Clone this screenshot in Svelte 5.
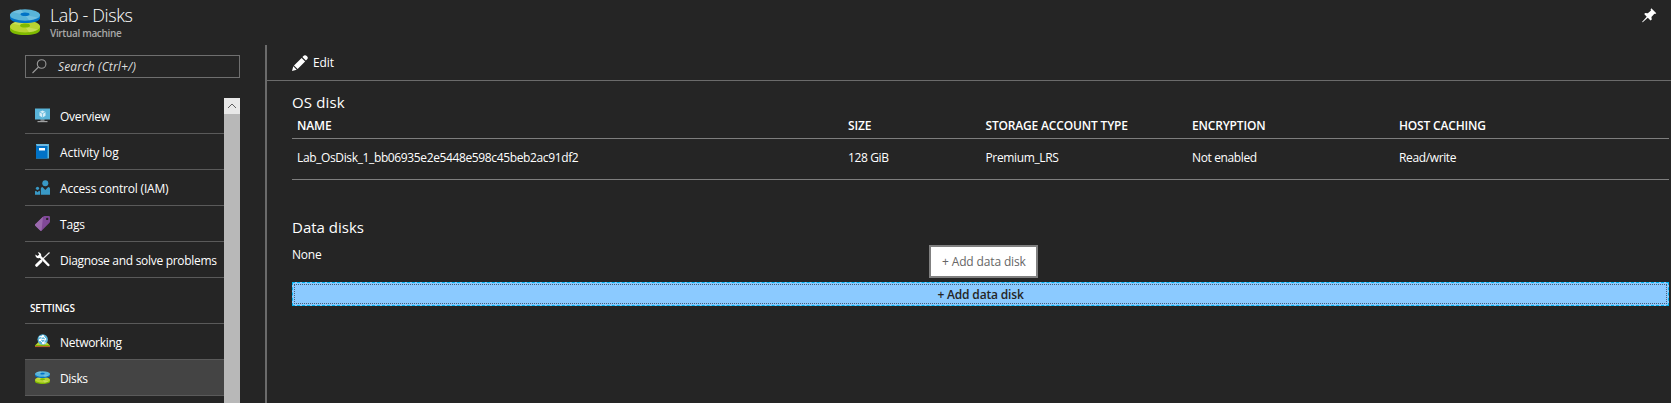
<script>
  const general = [
    { icon: 'overview', label: 'Overview', ls: -0.3 },
    { icon: 'log', label: 'Activity log', ls: -0.1 },
    { icon: 'access', label: 'Access control (IAM)', ls: -0.18 },
    { icon: 'tag', label: 'Tags', ls: -0.15 },
    { icon: 'tools', label: 'Diagnose and solve problems', ls: -0.3 }
  ];
  const settings = [
    { icon: 'network', label: 'Networking', ls: -0.3 },
    { icon: 'disks', label: 'Disks', ls: -0.35, active: true }
  ];
  const columns = ['NAME', 'SIZE', 'STORAGE ACCOUNT TYPE', 'ENCRYPTION', 'HOST CACHING'];
  const disk = ['Lab_OsDisk_1_bb06935e2e5448e598c45beb2ac91df2', '128 GiB', 'Premium_LRS', 'Not enabled', 'Read/write'];
</script>

{#snippet disks(size)}
  <svg width={size} height={size} viewBox="0 0 30 30">
    <path d="M0 19v4c0 3 6.700 5 15 5s15-2 15-5v-4z" fill="#7fba00" />
    <ellipse cx="15" cy="19.500" rx="15" ry="6" fill="#b8d432" />
    <path d="M15 19.500L2 16.500Q6 14 11 13.700zM15 19.500l13 3q-4 2.500-9 2.800z" fill="#d3e67b" opacity=".5" />
    <ellipse cx="15" cy="18.500" rx="5" ry="2" fill="#7fba00" />
    <path d="M0 7v4c0 3 6.700 5 15 5s15-2 15-5V7z" fill="#0072c6" />
    <ellipse cx="15" cy="8" rx="15" ry="5.700" fill="#59b4d9" />
    <path d="M15 8L2 5Q6 2.800 11 2.500zM15 8l13 2.500q-4 2.500-9 2.800z" fill="#8bcbe5" opacity=".5" />
    <ellipse cx="15" cy="7.300" rx="4.500" ry="1.800" fill="#0072c6" />
  </svg>
{/snippet}

{#snippet glyph(name)}
  {#if name === 'overview'}
    <svg width="15" height="15" viewBox="0 0 15 15">
      <path d="M5.500 11h4v2.500h-4z" fill="#7a7a7a" /><path d="M2.500 13h10v1.200h-10z" fill="#a0a1a2" />
      <path d="M0 .500h15v11H0z" fill="#59b4d9" />
      <path d="M7.500 2.500l3 1.500v3.800l-3 1.700-3-1.700V4z" fill="#d5edf7" />
      <path d="M4.500 4l3 1.500L10.500 4M7.500 5.500v4" stroke="#59b4d9" stroke-width=".7" fill="none" />
    </svg>
  {:else if name === 'log'}
    <svg width="15" height="15" viewBox="0 0 15 15">
      <path d="M1 0h13v14.500H1z" fill="#59b4d9" /><path d="M2 .900h10.500v1H2z" fill="#fff" />
      <path d="M1 1.500h11.500v13H1z" fill="#0072c6" /><path d="M4 4h6v2.500H4z" fill="#fff" />
    </svg>
  {:else if name === 'access'}
    <svg width="15" height="15" viewBox="0 0 15 15" fill="#3999c6">
      <circle cx="10.300" cy="3.200" r="3" /><path d="M5.800 14.800V8.500Q5.800 7 7.500 7l2.800 3L13.200 7Q15 7 15 8.500v6.300z" />
      <circle cx="2.500" cy="8.300" r="1.600" /><path d="M0 14.800v-3q0-1 1-1l1.500 1.500L4 10.800q1 0 1 1v3z" />
    </svg>
  {:else if name === 'tag'}
    <svg width="15" height="15" viewBox="0 0 15 15">
      <path d="M0 8.500L8 .700Q8.700.100 9.700.100h4.100Q15 .100 15 1.200v4.200q0 .900-.700 1.600L6.800 14.500Q6 15.200 5.200 14.500L.300 9.700Q-.300 9 0 8.500z" fill="#804998" />
      <path d="M0 8.500L8 .700 6.500 14.800Q6 15.200 5.200 14.500L.300 9.700Q-.300 9 0 8.500z" fill="#9a69ad" />
      <circle cx="12.200" cy="2.900" r="1.200" fill="#252525" />
    </svg>
  {:else if name === 'tools'}
    <svg width="15" height="15" viewBox="0 0 15 15">
      <path d="M14.500.500L5.800 8.800" stroke="#eee" stroke-width="1.200" /><path d="M1.700 13.300l4.100-4" stroke="#fff" stroke-width="3" stroke-linecap="round" />
      <path d="M5 4.500l8.300 8.500" stroke="#fff" stroke-width="2.500" stroke-linecap="round" />
      <path d="M2.800.300Q5 .100 6 2q.600 1.500-.200 2.800L4.500 6Q2.500 6.500 1.200 5.200.200 4.200.500 2.500l2 1.600 1.800-1.600z" fill="#fff" />
    </svg>
  {:else if name === 'network'}
    <svg width="15" height="15" viewBox="0 0 15 15">
      <path d="M0 11.500L3.500 8h8l3.500 3.500z" fill="#b8d432" /><path d="M0 11.500h15v1.600H0z" fill="#b3602d" /><path d="M0 11h15v.900H0z" fill="#7fba00" />
      <circle cx="7.700" cy="5.500" r="5.200" fill="#59b4d9" />
      <path d="M4 3l4-1 3 3-3 4-3-3 3-4M5 6l6-1M8 9l3 0" stroke="#fff" stroke-width="1" fill="none" />
      <circle cx="8" cy="2.200" r="1.200" fill="#fff" /><circle cx="5" cy="6" r="1.200" fill="#fff" /><circle cx="8.200" cy="9" r="1.200" fill="#fff" />
    </svg>
  {:else}
    {@render disks(15)}
  {/if}
{/snippet}

{#snippet item(entry)}
  <a class="item" class:active={entry.active}>
    {@render glyph(entry.icon)}
    <span style:letter-spacing="{entry.ls}px">{entry.label}</span>
  </a>
{/snippet}

<div class="blade">
  <header>
    {@render disks(30)}
    <div class="titles">
      <h1>Lab - Disks</h1>
      <p>Virtual machine</p>
    </div>
    <svg class="pin" width="15" height="15" viewBox="0 0 15 15" fill="#fff">
      <path d="M9.300.300l5 5-1.200.700-.700-.300-3 3.300.400 2.500-1.300 1L5.800 9.800.700 14.200 0 14l4.700-5.300L2.200 6.100l1-1.100 2.600.300L9 2.500 8.600 1.400z" />
    </svg>
  </header>
  <div class="body">
    <aside>
      <div class="search">
        <svg width="15" height="15" viewBox="0 0 15 15" fill="none" stroke="#9a9a9a" stroke-width="1.100">
          <circle cx="9.600" cy="5" r="4.300" /><path d="M6.500 8L.500 14" />
        </svg>
        <span>Search (Ctrl+/)</span>
      </div>
      <div class="menu">
        <nav>
          {#each general as entry}{@render item(entry)}{/each}
          <h2>SETTINGS</h2>
          {#each settings as entry}{@render item(entry)}{/each}
        </nav>
        <div class="scroll">
          <div class="up"><svg width="16" height="16" viewBox="0 0 16 16" fill="none" stroke="#606060"><path d="M4 10l4-4 4 4" /></svg></div>
        </div>
      </div>
    </aside>
    <main>
      <div class="toolbar">
        <svg width="16" height="16" viewBox="0 0 16 16" fill="#fff">
          <path d="M0 16l1.300-4.700 3.400 3.400zM2 10.400l7.600-7.500 3.500 3.500-7.500 7.600zM10.400 2.100L12 .600q1.300-1 2.800.400 1.700 1.500.600 3L13.900 5.600z" />
        </svg>
        <span>Edit</span>
      </div>
      <section class="content">
        <h3 class="os">OS disk</h3>
        <div class="row head">{#each columns as c}<span>{c}</span>{/each}</div>
        <div class="row cells">{#each disk as c}<span>{c}</span>{/each}</div>
        <h3 class="data">Data disks</h3>
        <p class="none">None</p>
        <div class="add">
          <div class="dots"><span>+ Add data disk</span></div>
          <div class="tip"><span>+ Add data disk</span></div>
        </div>
      </section>
    </main>
  </div>
</div>

<style>
  :global(body) { background: #252525; overflow: hidden; }
  * { box-sizing: border-box; }
  h1, h2, h3, p { margin: 0; }
  svg { display: block; flex: none; }
  .blade { height: 403px; display: flex; flex-direction: column; overflow: hidden; background: #252525; color: #fff; font: 12px/16px "Open Sans", sans-serif; white-space: nowrap; }
  header { height: 45px; flex: none; display: flex; padding: 7px 15px 0 10px; }
  .titles { flex: 1; padding-left: 10px; }
  h1 { font-size: 18px; line-height: 16px; font-weight: 300; letter-spacing: -.4px; }
  .titles p { font-size: 10px; line-height: 12px; font-weight: 600; color: #a8a8a8; margin-top: 4px; letter-spacing: -.33px; }
  .pin { margin-top: 1px; margin-right: -1px; }
  .body { flex: 1; min-height: 0; display: flex; }
  aside { width: 265px; flex: none; padding: 10px 25px 0; display: flex; flex-direction: column; }
  .search { height: 23px; width: 215px; flex: none; border: 1px solid #6f6f6f; display: flex; align-items: center; padding-left: 6px; gap: 11px; font-style: italic; color: #ddd; letter-spacing: .15px; }
  .menu { margin-top: 20px; width: 215px; flex: 1; min-height: 0; display: flex; }
  nav { flex: 1; min-width: 0; }
  .item { height: 36px; border-bottom: 1px solid #5a5a5a; display: flex; align-items: center; padding: 0 0 0 10px; gap: 10px; }
  .item span { padding-top: 3px; }
  .active { background: #444; }
  h2 { height: 46px; border-bottom: 1px solid #5a5a5a; font-size: 10px; line-height: 14px; padding: 23px 0 0 5px; font-weight: 600; letter-spacing: -.15px; }
  .scroll { width: 16px; flex: none; background: #b8b8b8; }
  .up { height: 16px; background: #e8e8e8; }
  main { flex: 1; min-width: 0; border-left: 2px solid #6b6b6b; }
  .toolbar { height: 36px; border-bottom: 1px solid #6b6b6b; display: flex; align-items: center; gap: 5px; padding: 0 0 0 25px; }
  .toolbar span { letter-spacing: -.1px; }
  .content { padding: 10px 2px 0 25px; }
  h3 { font-size: 15px; line-height: 22px; font-weight: 400; }
  .os { height: 23px; letter-spacing: .15px; }
  .row { display: grid; grid-template-columns: 551px 137.500px 206.500px 207px 1fr; padding-left: 5px; border-bottom: 1px solid #7e7e7e; }
  .head { height: 25px; line-height: 16px; padding-top: 4px; font-weight: 600; letter-spacing: -.17px; }
  .cells { height: 41px; line-height: 16px; padding-top: 11px; letter-spacing: -.37px; }
  .data { margin-top: 36px; }
  .none { margin-top: 9px; letter-spacing: -.2px; }
  .add { position: relative; margin-top: 19px; height: 24px; background: #8bcaff; border: 1px dashed #00b4f0; padding: 1px; }
  .dots { height: 20px; border: 1px dotted #4b5f78; text-align: center; line-height: 20px; font-weight: 600; color: #252525; letter-spacing: -.17px; }
  .tip { position: absolute; left: 636px; top: -38px; width: 109px; height: 33px; border: 2px solid #808080; background: #fff; color: #666; line-height: 30px; padding-left: 11px; letter-spacing: -.14px; }
</style>
